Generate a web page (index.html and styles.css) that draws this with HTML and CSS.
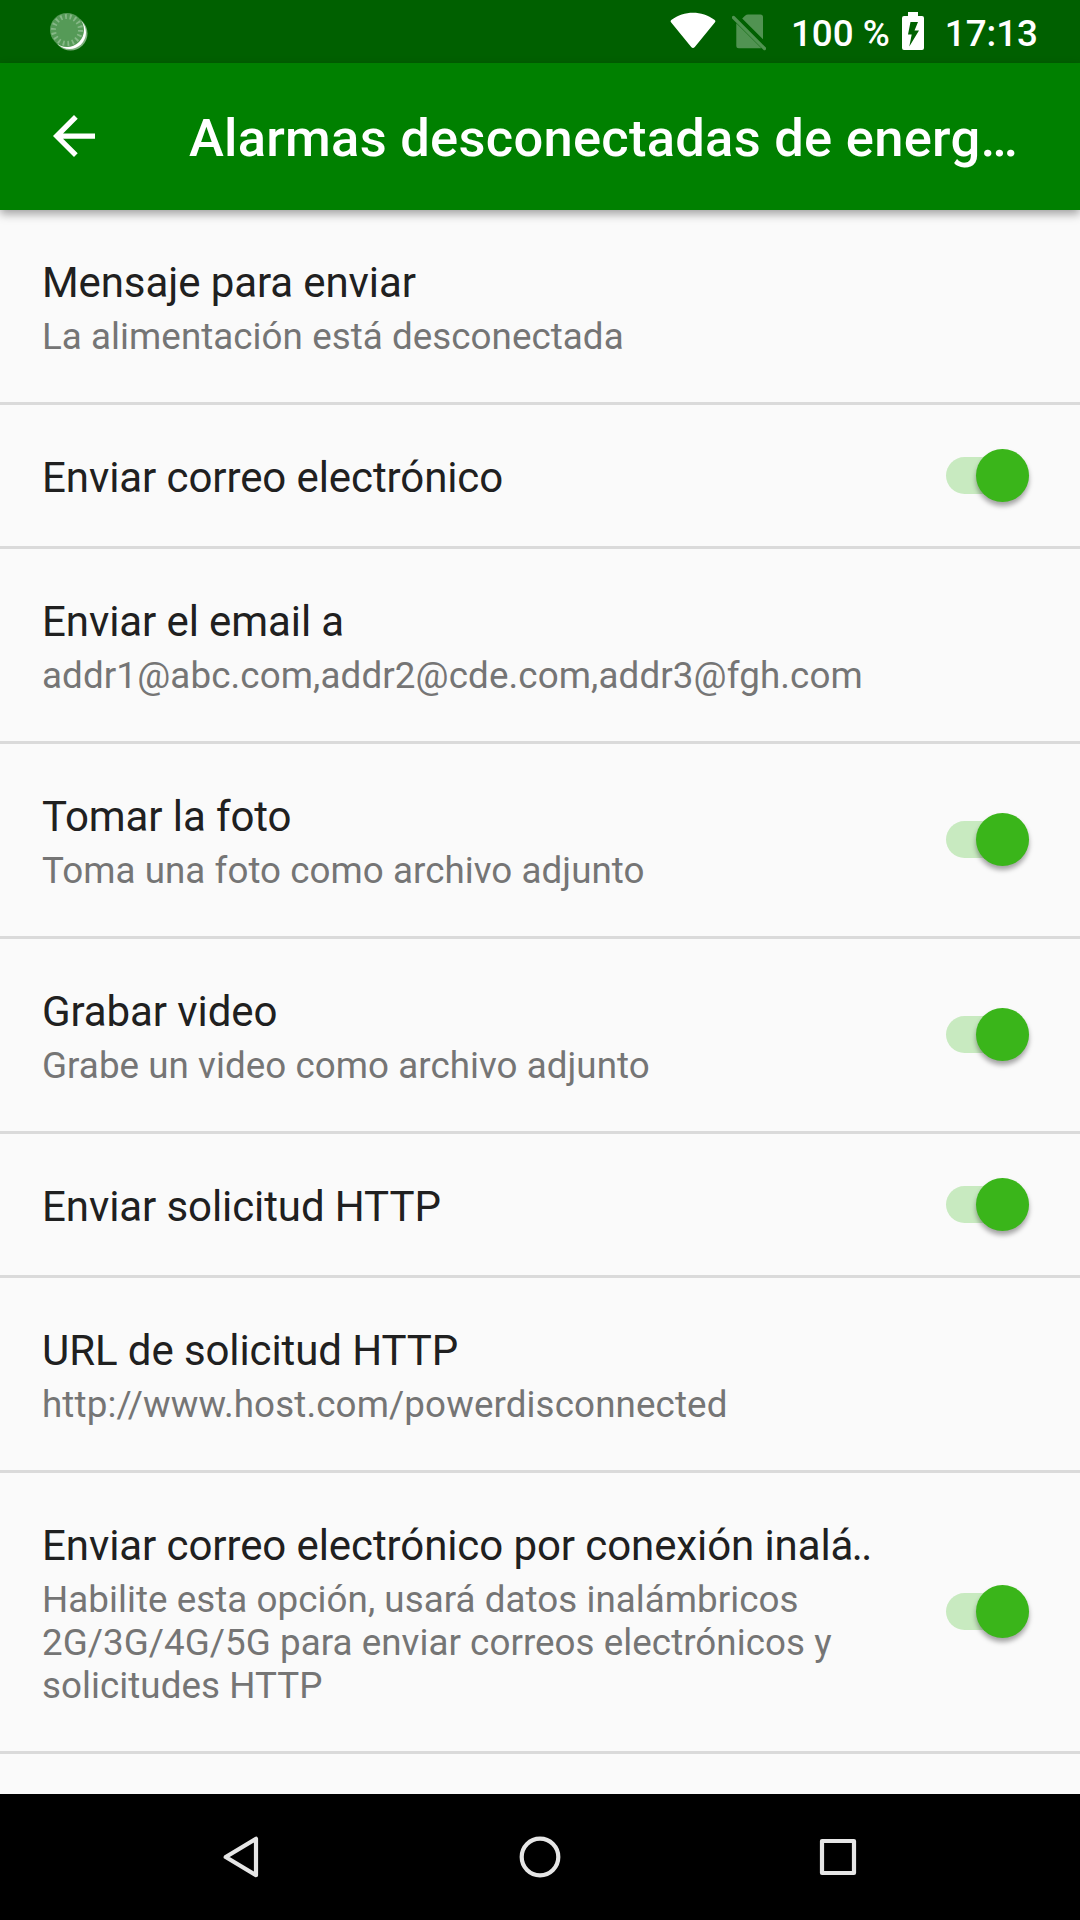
FILE: index.html
```html
<!DOCTYPE html>
<html lang="es">
<head>
<meta charset="UTF-8" />
<meta name="viewport" content="width=device-width, initial-scale=1" />
<title>Alarmas desconectadas de energía</title>
<link rel="stylesheet" href="styles.css">
</head>
<body>

<div class="status-bar">
  <svg class="icon-sync" width="38" height="40" viewBox="0 0 38 40">
    <circle cx="20.5" cy="21.5" r="17" fill="#7fb07f" />
    <circle cx="19.5" cy="20.5" r="16.5" fill="#fff" />
    <circle cx="17" cy="18" r="17" fill="#559a57" />
    <circle cx="17" cy="18" r="13.5" fill="none" stroke="#86b887" stroke-width="5" stroke-dasharray="1.8 2.91" />
  </svg>
  <div class="status-icons">
    <svg class="icon-wifi" width="46" height="38" viewBox="0 0 46 38">
      <path d="M1.2 10.5Q-.2 9 1.6 7.8C14-1.6 32-1.6 44.4 7.8Q46.2 9 44.8 10.5L24.8 35Q23 37.2 21.2 35Z" fill="#fff" />
    </svg>
    <svg class="icon-sim" width="34" height="38" viewBox="0 0 34 38">
      <path d="M10.2 4.4L13 1.7Q14.5.5 16 .5H28.5Q31 .5 31 3V25.2ZM4.3 9.2L29.5 34.3H6.8Q4.3 34.3 4.3 31.8Z" fill="#519352" />
      <path d="M1.5 3.500L32.5 34.500" stroke="#519352" stroke-width="3.2" stroke-linecap="round" />
    </svg>
    <span class="battery-level">100 %</span>
    <svg class="icon-battery" width="22" height="38" viewBox="0 0 22 38">
      <path fill-rule="evenodd" d="M6 0H16V4H20Q22 4 22 6V36Q22 38 20 38H2Q0 38 0 36V6Q0 4 2 4H6ZM16 10H8.5L6 22.5H9.7L7.3 34.5L17 18.5H12.5Z" fill="#fff" />
    </svg>
    <span class="clock">17:13</span>
  </div>
</div>

<header class="app-bar">
  <svg class="icon-back" width="42" height="42" viewBox="0 0 16 16">
    <path d="M16 7H3.83L9.42 1.41 8 0 0 8l8 8 1.41-1.41L3.83 9H16z" fill="#fff" />
  </svg>
  <h1>Alarmas desconectadas de energ…</h1>
</header>

<main class="settings">
  <div class="item">
    <div class="item-text">
      <div class="title">Mensaje para enviar</div>
      <div class="summary">La alimentación está desconectada</div>
    </div>
  </div>

  <div class="item">
    <div class="item-text">
      <div class="title">Enviar correo electrónico</div>
    </div>
    <div class="switch"><div class="thumb"></div></div>
  </div>

  <div class="item">
    <div class="item-text">
      <div class="title">Enviar el email a</div>
      <div class="summary address">addr1@abc.com,addr2@cde.com,addr3@fgh.com</div>
    </div>
  </div>

  <div class="item">
    <div class="item-text">
      <div class="title">Tomar la foto</div>
      <div class="summary">Toma una foto como archivo adjunto</div>
    </div>
    <div class="switch"><div class="thumb"></div></div>
  </div>

  <div class="item">
    <div class="item-text">
      <div class="title">Grabar video</div>
      <div class="summary">Grabe un video como archivo adjunto</div>
    </div>
    <div class="switch"><div class="thumb"></div></div>
  </div>

  <div class="item">
    <div class="item-text">
      <div class="title">Enviar solicitud HTTP</div>
    </div>
    <div class="switch"><div class="thumb"></div></div>
  </div>

  <div class="item">
    <div class="item-text">
      <div class="title">URL de solicitud HTTP</div>
      <div class="summary address">http://www.host.com/powerdisconnected</div>
    </div>
  </div>

  <div class="item">
    <div class="item-text">
      <div class="title">Enviar correo electrónico por conexión inal<span class="dots">á..</span></div>
      <div class="summary">Habilite esta opción, usará datos inalámbricos<br>2G/3G/4G/5G para enviar correos electrónicos y<br>solicitudes HTTP</div>
    </div>
    <div class="switch"><div class="thumb"></div></div>
  </div>
</main>

<nav class="nav-bar">
  <svg width="44" height="44" viewBox="0 0 44 44">
    <path d="M36 3.800V40.200L5.700 22Z" />
  </svg>
  <svg width="44" height="44" viewBox="0 0 44 44">
    <circle cx="22" cy="22" r="18.3" />
  </svg>
  <svg width="44" height="44" viewBox="0 0 44 44">
    <rect x="6" y="6" width="32" height="32" />
  </svg>
</nav>

</body>
</html>
```
FILE: styles.css
```css
* {
  box-sizing: border-box;
}

body {
  margin: 0;
  height: 1920px;
  display: flex;
  flex-direction: column;
  overflow: hidden;
  background: #fafafa;
  font-family: Roboto, "Liberation Sans", sans-serif;
}

/* Status bar */
.status-bar {
  display: flex;
  justify-content: space-between;
  align-items: flex-start;
  height: 63px;
  padding: 12px 42px 0 50px;
  background: #006000;
  color: #fff;
  font-size: 36.75px;
  font-weight: 500;
  line-height: 43px;
}

.status-icons {
  display: flex;
  align-items: flex-start;
}

.icon-wifi {
  margin-right: 16px;
}

.icon-sim {
  margin: 2px 25px 0 0;
}

.icon-battery {
  margin: 0 21px 0 12px;
}

/* App bar */
.app-bar {
  display: flex;
  align-items: center;
  height: 147px;
  padding: 0 0 1px 53px;
  background: #008000;
  box-shadow: 0 4px 9px rgb(0 0 0 / 0.36);
}

.app-bar h1 {
  margin: 3px 0 0 94px;
  color: #fff;
  font-size: 52.5px;
  font-weight: 500;
  line-height: 62px;
  letter-spacing: 0.26px;
  white-space: nowrap;
}

/* Settings list */
.settings {
  flex: 1;
}

.item {
  display: flex;
  justify-content: space-between;
  align-items: center;
  padding: 0 51px 0 42px;
  border-bottom: 3px solid #dadada;
}

.item-text {
  padding: 48px 0 44px;
}

.title {
  color: #202020;
  font-size: 42px;
  line-height: 49px;
  letter-spacing: -0.09px;
  white-space: nowrap;
}

.dots {
  letter-spacing: -1.6px;
}

.summary {
  margin-top: 8px;
  color: #757575;
  font-size: 36.75px;
  line-height: 43px;
  letter-spacing: 0.05px;
  white-space: nowrap;
}

.address {
  letter-spacing: 0.12px;
}

.switch {
  display: flex;
  align-items: center;
  justify-content: flex-end;
  width: 83px;
  height: 37px;
  margin-bottom: 0.6px;
  border-radius: 19px;
  background: #c8eac0;
}

.thumb {
  flex: none;
  width: 53px;
  height: 53px;
  border-radius: 50%;
  background: #3ab51a;
  box-shadow: 0 4px 5px rgb(0 0 0 / 0.35);
}

/* Navigation bar */
.nav-bar {
  display: flex;
  justify-content: center;
  align-items: center;
  gap: 254px;
  height: 126px;
  background: #000;
}

.nav-bar svg {
  fill: none;
  stroke: #e6e6e6;
  stroke-width: 4.2;
  stroke-linejoin: round;
}
```
